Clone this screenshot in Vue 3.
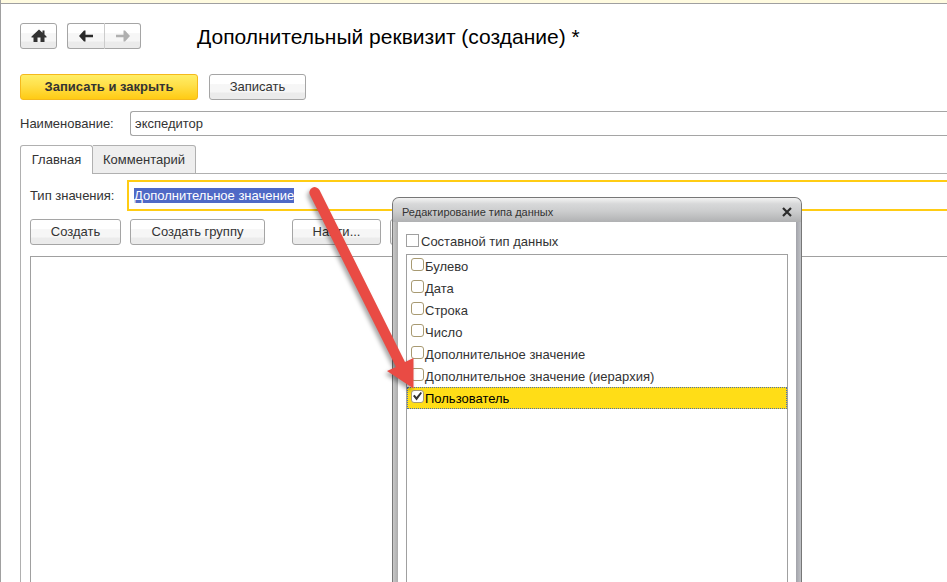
<script setup>
import { onMounted, ref } from 'vue'

const name = ref('экспедитор')
const valueType = ref('Дополнительное значение')
const typeInput = ref(null)
const composite = ref(false)
const types = ref([
  { label: 'Булево', checked: false },
  { label: 'Дата', checked: false },
  { label: 'Строка', checked: false },
  { label: 'Число', checked: false },
  { label: 'Дополнительное значение', checked: false },
  { label: 'Дополнительное значение (иерархия)', checked: false },
  { label: 'Пользователь', checked: true },
])

onMounted(() => {
  typeInput.value.focus()
  typeInput.value.select()
})
</script>

<template>
  <div class="window">
    <header class="head">
      <button class="btn icon home" type="button" aria-label="Домой">
        <svg width="16" height="14" viewBox="0 0 16 14"><path d="M8 0.500 0.500 7.500V8.500H2.500V13H6.500V8.500H9.500V13H13.500V8.500H15.500V7.500L13.500 5.500V1.500H11.500V3.700z" fill="#333" /></svg>
      </button>
      <div class="nav">
        <button class="btn icon" type="button" aria-label="Назад">
          <svg width="16" height="12" viewBox="0 0 16 12"><path d="M1 6 6 0.500H7.500V4.800H15V7.200H7.500V11.500H6z" fill="#2b2b2b" /></svg>
        </button>
        <button class="btn icon" type="button" aria-label="Вперёд">
          <svg width="16" height="12" viewBox="0 0 16 12"><path d="M15 6 10 0.500H8.500V4.800H1V7.200H8.500V11.500H10z" fill="#b0b0b0" /></svg>
        </button>
      </div>
      <h1>Дополнительный реквизит (создание) *</h1>
    </header>

    <div class="actions">
      <button class="btn primary" type="button">Записать и закрыть</button>
      <button class="btn save" type="button">Записать</button>
    </div>

    <div class="name-row">
      <label for="name">Наименование:</label>
      <input id="name" v-model="name" class="name-input" type="text" />
    </div>

    <div class="tabs" role="tablist">
      <button class="tab active" type="button" role="tab" aria-selected="true">Главная</button>
      <button class="tab" type="button" role="tab" aria-selected="false">Комментарий</button>
      <span class="tab-line"></span>
    </div>

    <main class="panel">
      <div class="type-row">
        <label for="type">Тип значения:</label>
        <input id="type" ref="typeInput" v-model="valueType" class="type-input" type="text" />
      </div>
      <div class="toolbar">
        <button class="btn create" type="button">Создать</button>
        <button class="btn group" type="button">Создать группу</button>
        <button class="btn find" type="button">Найти...</button>
        <button class="btn more" type="button" aria-label="Ещё"></button>
      </div>
      <div class="list"></div>
    </main>

    <section class="dialog" role="dialog" aria-labelledby="dialog-title">
      <div class="titlebar">
        <h2 id="dialog-title">Редактирование типа данных</h2>
        <button class="close" type="button" aria-label="Закрыть">
          <svg width="10" height="10" viewBox="0 0 10 10"><path d="M1 1 9 9M9 1 1 9" stroke="#2b2b2b" stroke-width="2.200" /></svg>
        </button>
      </div>
      <div class="dialog-body">
        <label class="composite"><input v-model="composite" type="checkbox" />Составной тип данных</label>
        <ul class="types">
          <li v-for="item in types" :key="item.label" :class="{ selected: item.checked }">
            <label><input v-model="item.checked" type="checkbox" />{{ item.label }}</label>
          </li>
        </ul>
      </div>
    </section>

    <svg class="pointer" width="140" height="230" viewBox="0 0 140 230" aria-hidden="true">
      <path d="M25.500 10 111 182 119.500 178V208.500L93 191 102 187 16 15A5.300 5.300 0 0 1 25.500 10Z" fill="#e94b44" />
    </svg>
  </div>
</template>

<style>
body {
  margin: 0;
}
</style>

<style scoped>
.window {
  position: relative;
  box-sizing: border-box;
  display: flex;
  flex-direction: column;
  height: 100vh;
  overflow: hidden;
  border-left: 1px solid #a0a0a0;
  background: #fff;
  color: #333;
  font: 13px/16px "Liberation Sans", Arial, sans-serif;
}

.window::before {
  content: "";
  flex: none;
  height: 3px;
  background: #fffbe0;
  border-bottom: 1px solid #a0a0a0;
}

button,
input {
  box-sizing: border-box;
  margin: 0;
  font: inherit;
  color: inherit;
}

.btn {
  height: 26px;
  padding: 0;
  border: 1px solid #a5a5a5;
  border-radius: 3px;
  background: linear-gradient(#fff 0 36%, #f6f6f6 40% 70%, #ebebeb 76%);
}

.head {
  display: flex;
  align-items: center;
  height: 26px;
  margin: 19px 0 0 19px;
}

.icon {
  display: flex;
  align-items: center;
  justify-content: center;
  width: 37px;
}

.nav {
  display: flex;
  margin-left: 10px;
}

.nav .btn:first-child {
  width: 38px;
  border-right-color: #ccc;
  border-radius: 3px 0 0 3px;
}

.nav .btn:last-child {
  width: 36px;
  border-left: 0;
  border-radius: 0 3px 3px 0;
}

h1 {
  margin: 2px 0 0 56px;
  color: #000;
  font-size: 21px;
  font-weight: 400;
  line-height: 26px;
  white-space: nowrap;
}

.actions {
  display: flex;
  gap: 11px;
  margin: 25px 0 0 19px;
}

.primary {
  width: 178px;
  border-color: #f5b91c;
  background: linear-gradient(#ffee66, #ffe14c 40%, #ffcb14);
  font-weight: 700;
}

.save {
  width: 97px;
}

.name-row {
  display: flex;
  align-items: center;
  margin: 11px 0 0 19px;
}

.name-row label {
  width: 110px;
}

.name-input {
  flex: 1;
  height: 25px;
  padding: 0 4px;
  border: 1px solid #a5a5a5;
  border-right: 0;
  border-radius: 3px 0 0 3px;
}

.tabs {
  display: flex;
  height: 29px;
  margin: 9px 0 0 19px;
}

.tab {
  width: 103px;
  padding: 0;
  border: 1px solid #b0b0b0;
  border-left: 0;
  border-radius: 0 3px 0 0;
  background: #eee;
}

.tab.active {
  width: 73px;
  border-left: 1px solid #b0b0b0;
  border-bottom: 0;
  border-radius: 3px 3px 0 0;
  background: #fff;
}

.tab-line {
  flex: 1;
  border-bottom: 1px solid #b0b0b0;
}

.panel {
  flex: 1;
  display: flex;
  flex-direction: column;
  margin-left: 19px;
  padding: 6px 0 0 9px;
  border-left: 1px solid #b0b0b0;
}

.type-row {
  display: flex;
  align-items: center;
}

.type-row label {
  width: 97px;
}

.type-input {
  flex: 1;
  height: 31px;
  padding: 0 5px;
  border: 2px solid #ffcc14;
  border-right: 0;
  outline: none;
}

.type-input::selection {
  background: #4f69c6;
  color: #fff;
}

.toolbar {
  display: flex;
  margin-top: 8px;
}

.create {
  width: 91px;
}

.group {
  width: 135px;
  margin-left: 9px;
}

.find {
  width: 89px;
  margin-left: 27px;
}

.more {
  width: 89px;
  margin-left: 9px;
}

.list {
  flex: 1;
  margin-top: 11px;
  border: 1px solid #a0a0a0;
  border-width: 1px 0 0 1px;
}

.dialog {
  position: absolute;
  top: 197px;
  bottom: 0;
  left: 391px;
  box-sizing: border-box;
  display: flex;
  flex-direction: column;
  width: 410px;
  padding: 0 5px;
  border: 1px solid #777;
  border-bottom: 0;
  border-radius: 7px 7px 0 0;
  background: linear-gradient(90deg, #c8c8c8, #acacac 5px, #a2a3aa 403px, #bfc1c5);
}

.titlebar {
  display: flex;
  align-items: center;
  justify-content: space-between;
  height: 24px;
  margin: 0 -5px;
  padding: 0 8px 0 9px;
  border-radius: 6px 6px 0 0;
  background: linear-gradient(#f4f4f4, #d7d8d9 25%, #cccdce 55%, #b0b1b3);
}

h2 {
  margin: 4px 0 0;
  font-size: 11px;
  font-weight: 400;
  line-height: 16px;
}

.close {
  display: flex;
  margin-top: 3px;
  padding: 1px;
  border: 0;
  background: none;
}

.dialog-body {
  flex: 1;
  display: flex;
  flex-direction: column;
  padding: 12px 8px 0;
  background: #fff;
}

.composite,
.types label {
  display: flex;
  align-items: flex-start;
}

.composite {
  gap: 2px;
  height: 16px;
}

input[type="checkbox"] {
  appearance: none;
  flex: none;
  width: 13px;
  height: 13px;
  border: 1px solid #a0a0a0;
  background: #fff;
}

.types {
  flex: 1;
  margin: 4px 0 0;
  padding: 0;
  border: 1px solid #a0a0a0;
  border-bottom: 0;
  list-style: none;
}

.types li {
  box-sizing: border-box;
  height: 22px;
  padding: 0 3px;
  border: 1px solid transparent;
}

.types label {
  gap: 1px;
  padding-top: 2px;
  line-height: 18px;
}

.types input[type="checkbox"] {
  border-color: #a89a72;
  border-radius: 3px;
}

.types input:checked::before {
  content: "";
  display: block;
  width: 9px;
  height: 9px;
  margin: 1px;
  background: #333;
  clip-path: polygon(0 45%, 18% 30%, 38% 55%, 85% 0, 100% 12%, 40% 95%);
}

.types .selected {
  border: 1px dotted #4b6fae;
  background: #ffdd17;
  color: #000;
}

.pointer {
  position: absolute;
  top: 180px;
  left: 293px;
  filter: drop-shadow(-2px 3px 2px rgb(0 0 0 / 35%));
  pointer-events: none;
}
</style>
